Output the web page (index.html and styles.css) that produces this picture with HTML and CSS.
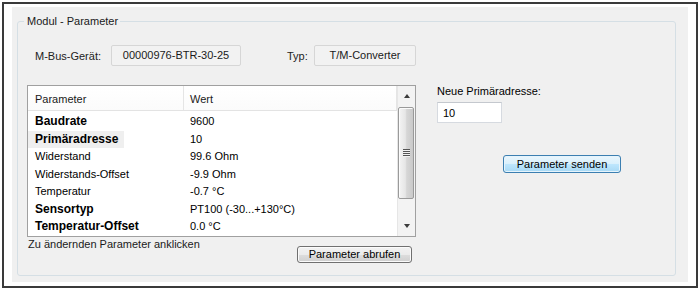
FILE: index.html
```html
<!DOCTYPE html>
<html lang="de">
<head>
<meta charset="utf-8">
<title>Modul - Parameter</title>
<link rel="stylesheet" href="styles.css">
</head>
<body>
<div class="frame">
  <div class="panel">
    <fieldset class="group">
      <legend class="group-title">Modul - Parameter</legend>
      <div class="group-body">
        <div class="device-row">
          <span class="field-label label-device">M-Bus-Gerät:</span>
          <span class="readonly box-device">00000976-BTR-30-25</span>
          <span class="field-label label-type">Typ:</span>
          <span class="readonly box-type">T/M-Converter</span>
        </div>
        <div class="main">
          <div class="list-col">
            <div class="listview">
              <div class="lv-grid">
                <div class="lv-header">
                  <div class="lv-h c1">Parameter</div>
                  <div class="lv-h c2">Wert</div>
                </div>
                <div class="lv-body">
                  <div class="lv-row"><div class="cell c1 strong">Baudrate</div><div class="cell c2">9600</div></div>
                  <div class="lv-row"><div class="cell c1 strong focus"><span class="focus-box">Primäradresse</span></div><div class="cell c2">10</div></div>
                  <div class="lv-row"><div class="cell c1">Widerstand</div><div class="cell c2">99.6 Ohm</div></div>
                  <div class="lv-row"><div class="cell c1">Widerstands-Offset</div><div class="cell c2">-9.9 Ohm</div></div>
                  <div class="lv-row"><div class="cell c1">Temperatur</div><div class="cell c2">-0.7 °C</div></div>
                  <div class="lv-row"><div class="cell c1 strong">Sensortyp</div><div class="cell c2">PT100 (-30...+130°C)</div></div>
                  <div class="lv-row"><div class="cell c1 strong">Temperatur-Offset</div><div class="cell c2">0.0 °C</div></div>
                </div>
              </div>
              <div class="vscroll">
                <div class="sb-btn"><span class="arrow-up"></span></div>
                <div class="sb-track"><div class="sb-thumb"><span class="grip"></span></div></div>
                <div class="sb-btn"><span class="arrow-down"></span></div>
              </div>
            </div>
            <div class="list-foot">
              <span class="hint">Zu ändernden Parameter anklicken</span>
              <button class="btn btn-fetch" type="button">Parameter abrufen</button>
            </div>
          </div>
          <div class="edit-col">
            <label class="edit-label" for="addr">Neue Primäradresse:</label>
            <input id="addr" class="textbox" type="text" value="10">
            <button class="btn btn-default" type="button">Parameter senden</button>
          </div>
        </div>
      </div>
    </fieldset>
  </div>
</div>
</body>
</html>
```

FILE: styles.css
```css
html, body {
  margin: 0;
  padding: 0;
  background: #ffffff;
}

body {
  font-family: "Liberation Sans", Arial, sans-serif;
  font-size: 11px;
  color: #000;
}

.frame {
  margin: 2px 2px 1px 2px;
  height: 286px;
  box-sizing: border-box;
  border: 2px solid #3a3a3a;
  padding: 3px 8px 4px 8px;
  background: #ffffff;
  display: flex;
}

.panel {
  flex: 1;
  background: #f0f0f0;
  padding: 8px 12px 6px 5px;
  display: flex;
  flex-direction: column;
}

.group {
  flex: 1;
  margin: 0;
  padding: 0;
  border: 1px solid #d5dfe5;
  border-radius: 3px;
  min-width: 0;
}

.group-title {
  margin-left: 6px;
  padding: 0 2px 0 3px;
  line-height: 13px;
  font-size: 11px;
  color: #1a1a1a;
}

.group-body {
  padding-left: 9px;
}

.device-row {
  display: flex;
  align-items: center;
  height: 21px;
  margin-top: 17px;
}

.field-label {
  color: #222;
}

.label-device {
  margin-left: 8px;
  width: 76px;
}

.label-type {
  margin-left: 46px;
  width: 27px;
}

.readonly {
  box-sizing: border-box;
  height: 21px;
  line-height: 19px;
  border: 1px solid #d6d6d6;
  border-radius: 2px;
  background: #f2f2f2;
  text-align: center;
  color: #1a1a1a;
}

.box-device {
  width: 130px;
}

.box-type {
  width: 102px;
}

.main {
  display: flex;
  margin-top: 19px;
}

.list-col {
  width: 389px;
  display: flex;
  flex-direction: column;
}

.listview {
  box-sizing: border-box;
  height: 152px;
  border: 1px solid #a0a0a0;
  background: #ffffff;
  display: flex;
  overflow: hidden;
}

.lv-grid {
  width: 369px;
  overflow: hidden;
}

.lv-header {
  display: flex;
  height: 25px;
  box-sizing: border-box;
  border-bottom: 1px solid #e3e3e3;
  background: linear-gradient(#ffffff, #fbfbfb);
}

.lv-h {
  box-sizing: border-box;
  padding-top: 3px;
  line-height: 21px;
  color: #1a1a1a;
}

.lv-h.c1 {
  width: 156px;
  padding-left: 7px;
  border-right: 1px solid #e5e5e5;
}

.lv-h.c2 {
  flex: 1;
  padding-left: 6px;
  border-right: 1px solid #e5e5e5;
}

.lv-body {
  padding-top: 2px;
}

.lv-row {
  display: flex;
  height: 17.5px;
  line-height: 17.5px;
}

.cell {
  box-sizing: border-box;
  white-space: nowrap;
}

.cell.c1 {
  width: 156px;
  padding-left: 7px;
}

.cell.c2 {
  flex: 1;
  padding-left: 6px;
}

.cell.strong {
  font-weight: bold;
  font-size: 12px;
}

.cell.c1.focus {
  padding-left: 0;
}

.focus-box {
  display: inline-block;
  height: 17.5px;
  padding: 0 6px 0 7px;
  background: #efefef;
}

.vscroll {
  width: 18px;
  display: flex;
  flex-direction: column;
  background: #f3f3f3;
  border-left: 1px solid #e6e6e6;
  box-sizing: border-box;
}

.sb-btn {
  height: 20px;
  display: flex;
  align-items: center;
  justify-content: center;
}

.arrow-up {
  width: 0;
  height: 0;
  border-left: 3.5px solid transparent;
  border-right: 3.5px solid transparent;
  border-bottom: 4px solid #3c3c3c;
}

.arrow-down {
  width: 0;
  height: 0;
  border-left: 3.5px solid transparent;
  border-right: 3.5px solid transparent;
  border-top: 4px solid #3c3c3c;
}

.sb-track {
  flex: 1;
  padding-top: 1px;
}

.sb-thumb {
  height: 92px;
  margin: 0 1px 0 0;
  box-sizing: border-box;
  border: 1px solid #9a9a9a;
  border-radius: 2px;
  background: linear-gradient(to right, #f4f4f4 0%, #e6e6e6 45%, #d6d6d6 55%, #cacaca 100%);
  box-shadow: inset 1px 1px 0 #fbfbfb;
  display: flex;
  align-items: center;
  justify-content: center;
}

.grip {
  display: block;
  width: 7px;
  height: 8px;
  background: repeating-linear-gradient(to bottom, #555 0, #555 1px, #f2f2f2 1px, #f2f2f2 2px);
}

.list-foot {
  display: flex;
  justify-content: space-between;
  align-items: flex-start;
  margin-top: 1px;
}

.hint {
  margin-left: 1px;
  line-height: 13px;
  color: #1a1a1a;
}

.btn {
  font-family: "Liberation Sans", Arial, sans-serif;
  font-size: 11px;
  color: #000;
  padding: 0;
  box-sizing: border-box;
  border: 1px solid #707070;
  border-radius: 3px;
  background: linear-gradient(#f2f2f2 0%, #ebebeb 50%, #dddddd 51%, #cfcfcf 100%);
  box-shadow: inset 0 0 0 1px #fbfbfb;
  text-align: center;
}

.btn-fetch {
  width: 115px;
  height: 17px;
  line-height: 15px;
  margin-top: 8px;
  margin-right: 4px;
}

.edit-col {
  margin-left: 21px;
  display: flex;
  flex-direction: column;
  align-items: flex-start;
}

.edit-label {
  line-height: 13px;
  color: #000;
}

.textbox {
  margin-top: 4px;
  width: 65px;
  height: 21px;
  box-sizing: border-box;
  border: 1px solid #d6dae0;
  border-top-color: #c4c8ce;
  background: #ffffff;
  padding: 0 5px;
  font-family: "Liberation Sans", Arial, sans-serif;
  font-size: 11px;
  color: #000;
  outline: none;
}

.btn-default {
  margin-top: 32px;
  margin-left: 66px;
  width: 118px;
  height: 18px;
  line-height: 16px;
  border-color: #3c7fb1;
  background: linear-gradient(#eaf6fd 0%, #d9f0fc 50%, #bee6fd 51%, #a7d9f5 100%);
  box-shadow: inset 0 0 0 1px #e6f4fc;
}
```
